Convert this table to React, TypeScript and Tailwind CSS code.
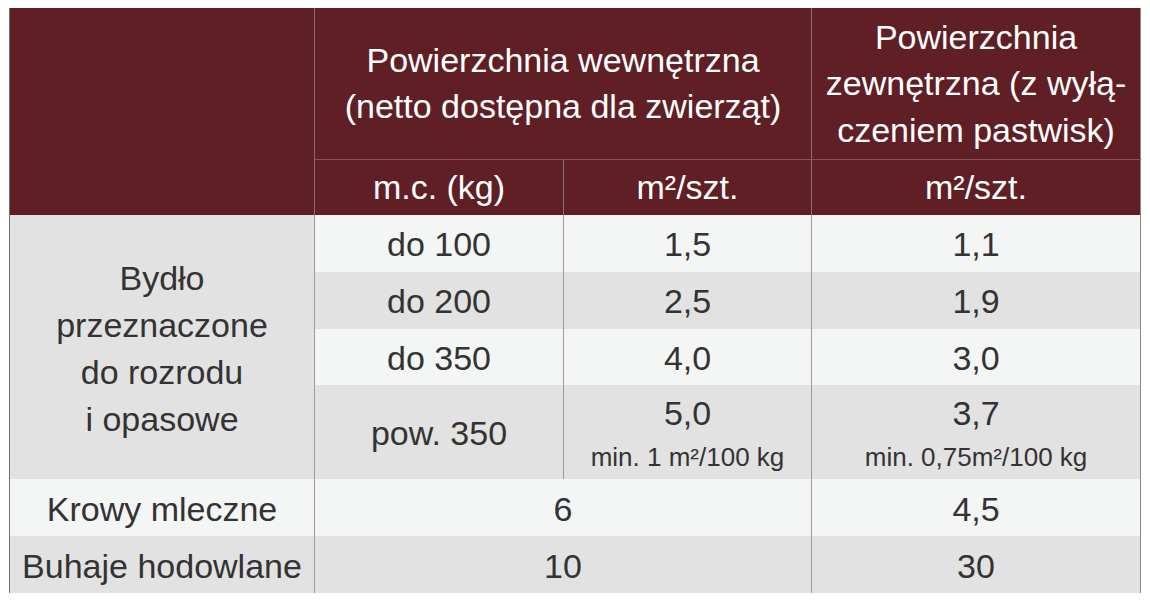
import React from 'react';

interface BodyRow {
  weight: string;
  inner: string;
  innerNote?: string;
  outer: string;
  outerNote?: string;
  shade: 'light' | 'gray';
  height: string;
}

const cattleRows: BodyRow[] = [
  { weight: 'do 100', inner: '1,5', outer: '1,1', shade: 'light', height: 'h-[57px]' },
  { weight: 'do 200', inner: '2,5', outer: '1,9', shade: 'gray', height: 'h-[57px]' },
  { weight: 'do 350', inner: '4,0', outer: '3,0', shade: 'light', height: 'h-[56px]' },
  {
    weight: 'pow. 350',
    inner: '5,0',
    innerNote: 'min. 1 m²/100 kg',
    outer: '3,7',
    outerNote: 'min. 0,75m²/100 kg',
    shade: 'gray',
    height: 'h-[94px]',
  },
];

const Value: React.FC<{ value: string; note?: string }> = ({ value, note }) => {
  if (!note) return <>{value}</>;
  return (
    <div className="pt-[6px]">
      <div className="leading-[44px]">{value}</div>
      <div className="text-[26px] leading-[44px]">{note}</div>
    </div>
  );
};

const App: React.FC = () => {
  return (
    <div className="bg-white w-[1150px] h-[604px] pt-[8px] pl-[9px] font-['Liberation_Sans',Arial,sans-serif]">
      <table className="table-fixed border-collapse w-[1131px] text-[34px] text-center border-l border-r border-l-[#727272] border-r-[#8a8a8a]">
        <colgroup>
          <col className="w-[305px]" />
          <col className="w-[249px]" />
          <col className="w-[248px]" />
          <col className="w-[329px]" />
        </colgroup>
        <thead className="bg-[#5f1f24] text-white font-normal">
          <tr className="h-[151px]">
            <th rowSpan={2} className="font-normal border-r border-r-[#8a6d70]" />
            <th colSpan={2} className="font-normal leading-[46px] border-r border-b border-r-[#8a6d70] border-b-[#8b5257]">
              Powierzchnia wewnętrzna
              <br />
              (netto dostępna dla zwierząt)
            </th>
            <th className="font-normal leading-[46.5px] border-b border-b-[#8b5257]">
              Powierzchnia
              <br />
              zewnętrzna (z wyłą-
              <br />
              czeniem pastwisk)
            </th>
          </tr>
          <tr className="h-[56px]">
            <th className="font-normal border-r border-r-[#8a6d70]">m.c. (kg)</th>
            <th className="font-normal border-r border-r-[#8a6d70]">m²/szt.</th>
            <th className="font-normal">m²/szt.</th>
          </tr>
        </thead>
        <tbody className="text-[#333333]">
          {cattleRows.map((row, i) => {
            const bg = row.shade === 'light' ? 'bg-[#f4f5f5]' : 'bg-[#e2e2e2]';
            return (
              <tr key={row.weight} className={row.height}>
                {i === 0 && (
                  <td rowSpan={4} className="bg-[#e2e2e2] leading-[47px] border-r border-r-[#9a9a9a] pt-[4px]">
                    Bydło
                    <br />
                    przeznaczone
                    <br />
                    do rozrodu
                    <br />
                    i opasowe
                  </td>
                )}
                <td className={`${bg} border-r border-r-[#9a9a9a] pt-[2px]`}>{row.weight}</td>
                <td className={`${bg} border-r border-r-[#9a9a9a] ${row.innerNote ? '' : 'pt-[2px]'}`}>
                  <Value value={row.inner} note={row.innerNote} />
                </td>
                <td className={`${bg} ${row.outerNote ? '' : 'pt-[2px]'}`}>
                  <Value value={row.outer} note={row.outerNote} />
                </td>
              </tr>
            );
          })}
          <tr className="h-[57px] bg-[#f4f5f5]">
            <td className="border-r border-r-[#9a9a9a] pt-[4px]">Krowy mleczne</td>
            <td colSpan={2} className="border-r border-r-[#9a9a9a] pt-[4px]">6</td>
            <td className="pt-[4px]">4,5</td>
          </tr>
          <tr className="h-[57px] bg-[#e2e2e2]">
            <td className="border-r border-r-[#9a9a9a] pt-[3px]">Buhaje hodowlane</td>
            <td colSpan={2} className="border-r border-r-[#9a9a9a] pt-[3px]">10</td>
            <td className="pt-[3px]">30</td>
          </tr>
        </tbody>
      </table>
    </div>
  );
};

export default App;
